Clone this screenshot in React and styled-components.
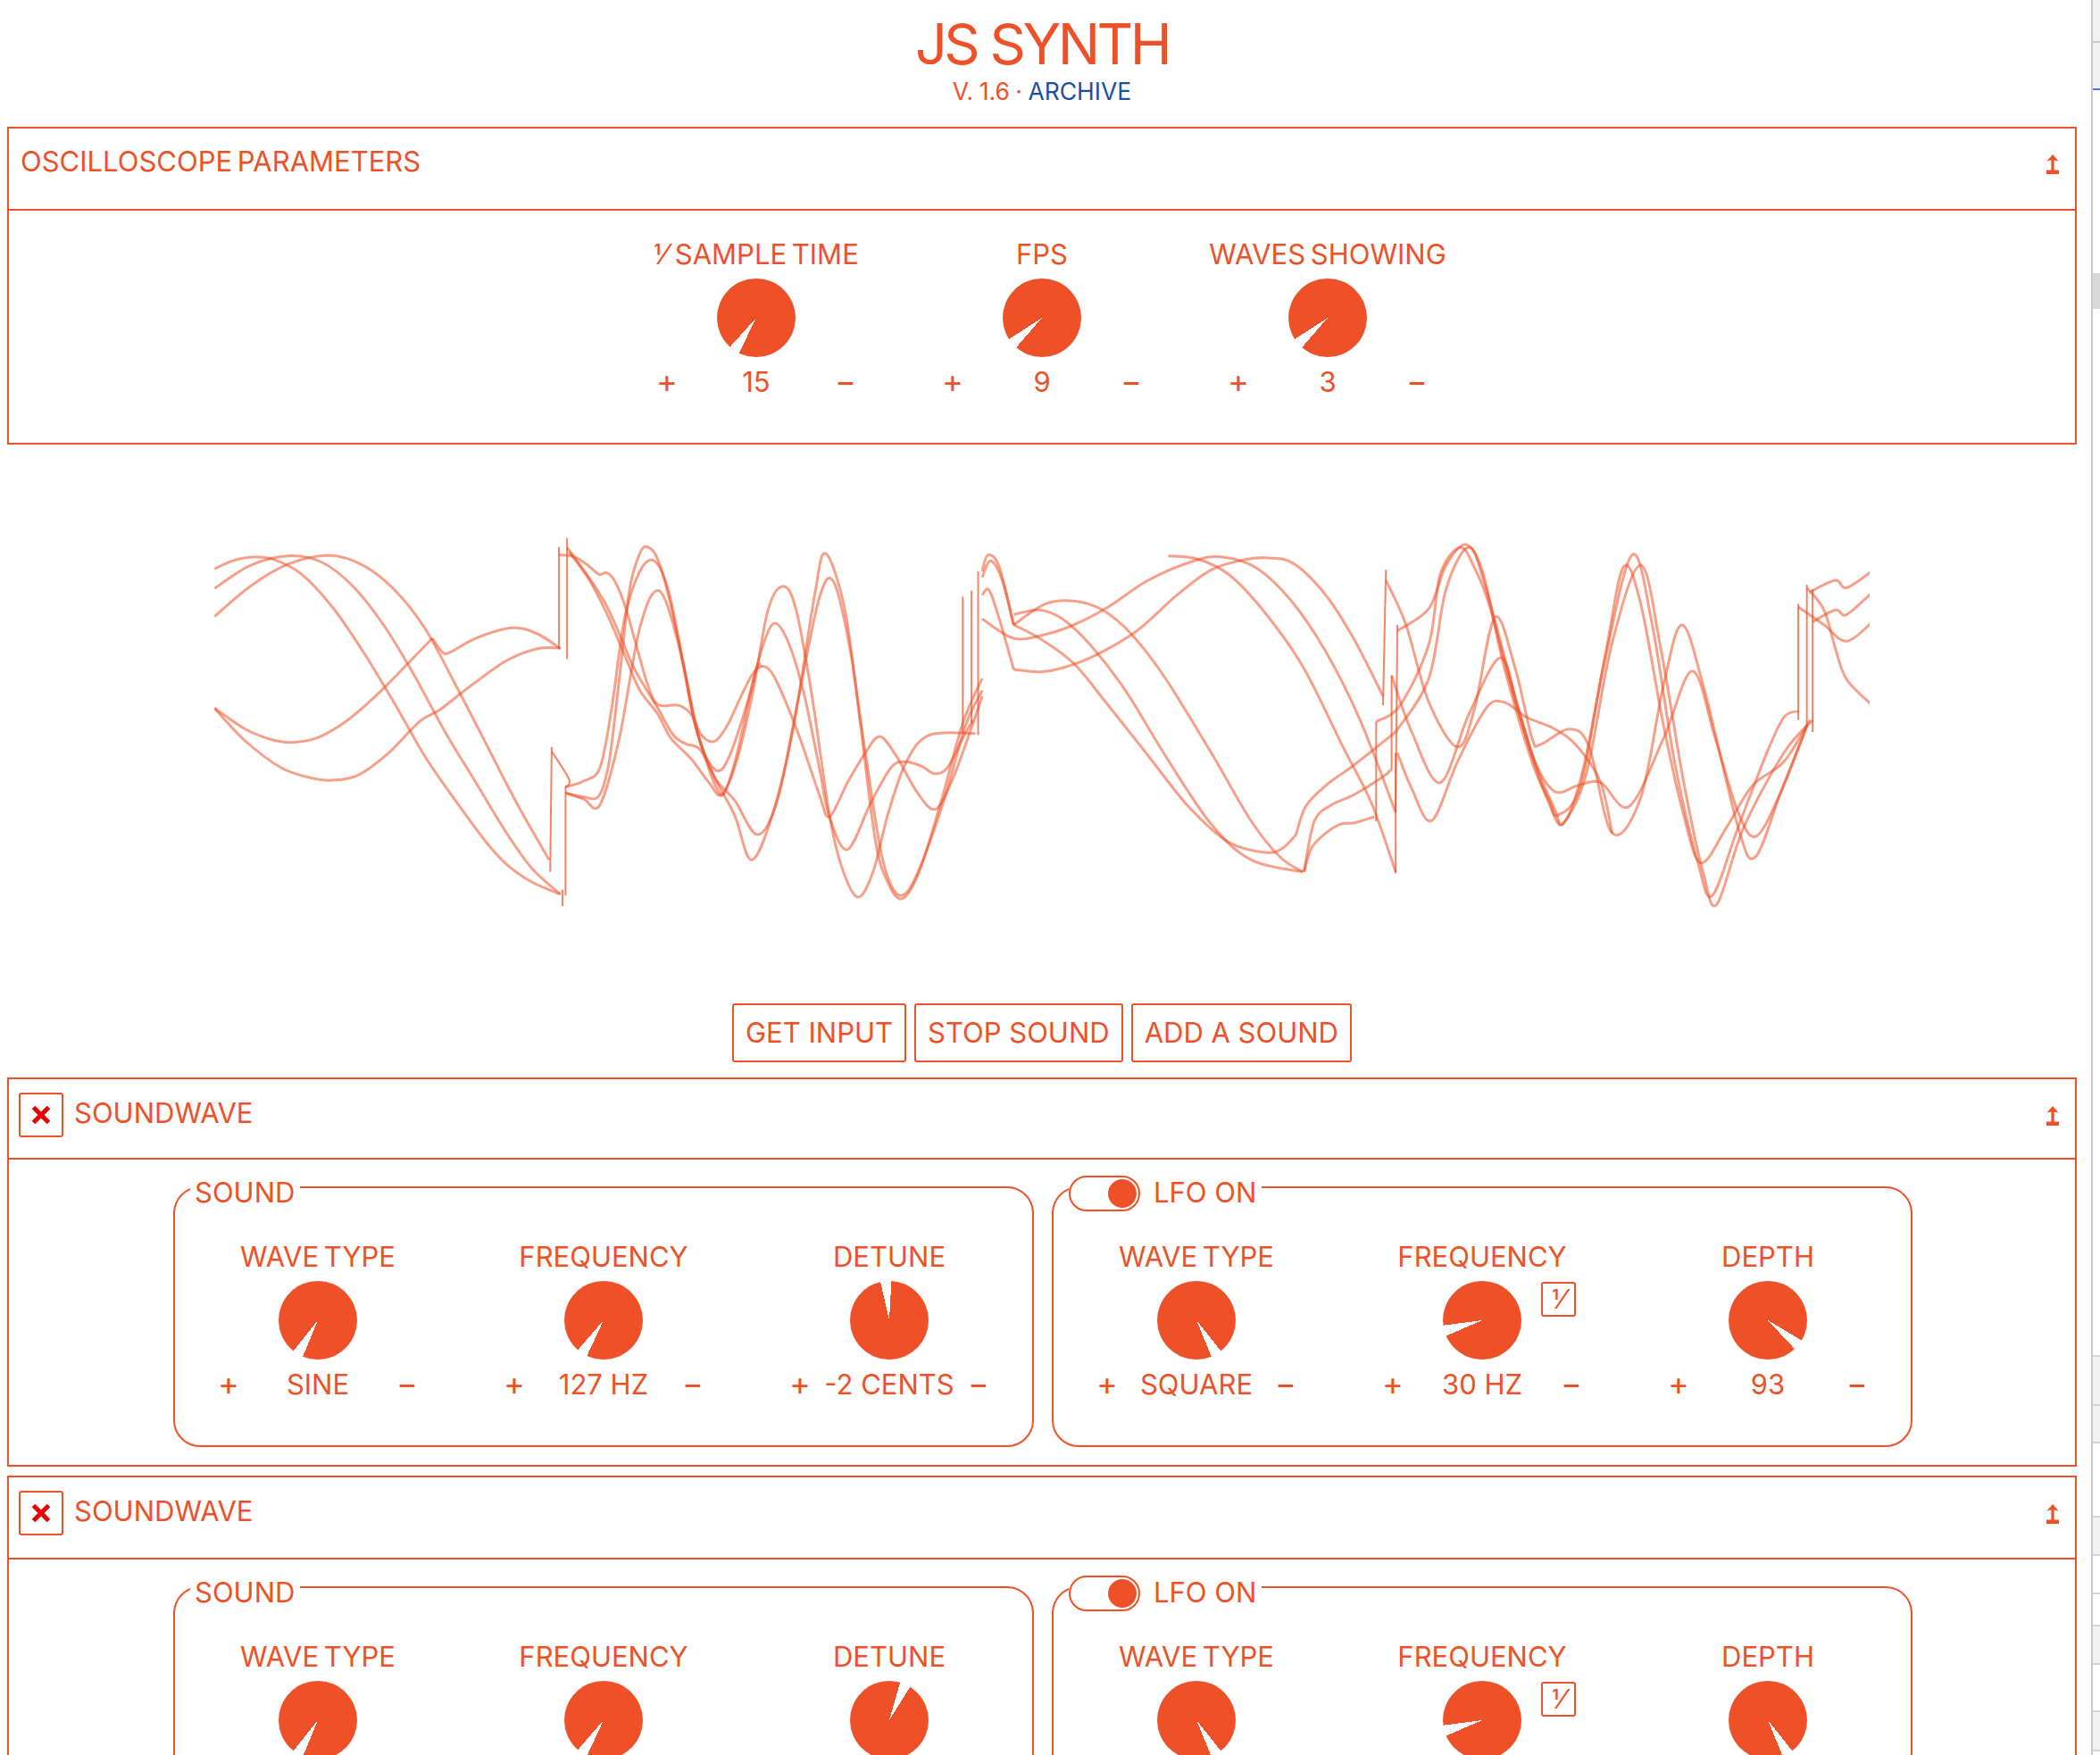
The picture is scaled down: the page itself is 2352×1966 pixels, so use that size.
import React from "react";
import styled, { createGlobalStyle } from "styled-components";

const ORANGE = "#ee5028";

const GlobalStyle = createGlobalStyle`
  html, body {
    margin: 0;
    padding: 0;
    height: 1966px;
    overflow: hidden;
    background: #fff;
  }
  body {
    font-family: Inter, "Liberation Sans", sans-serif;
    font-weight: 400;
    word-spacing: -3px;
    color: ${ORANGE};
  }
`;

const Shell = styled.div`
  display: flex;
  width: 2352px;
  height: 1966px;
  overflow: hidden;
`;

const Main = styled.main`
  width: 2342px;
  flex: none;
  padding: 0 16px 0 8px;
  box-sizing: border-box;
`;

const SideStrip = styled.aside`
  flex: 1;
  border-left: 2px solid #c9c9ce;
  display: flex;
  flex-direction: column;
`;

const StripBlock = styled.div`
  height: ${(p) => p.$h}px;
  box-sizing: border-box;
  background: ${(p) => p.$bg || "#fff"};
  border-bottom: ${(p) => (p.$line ? `2px solid ${p.$line}` : "none")};
  flex: none;
`;

const Header = styled.header`
  text-align: center;
  height: 142px;
  box-sizing: border-box;
  padding-top: 12px;
`;

const Title = styled.h1`
  margin: 0;
  font-size: 63px;
  line-height: 74px;
  font-weight: 400;
  letter-spacing: -3.5px;
  word-spacing: 0;
`;

const Version = styled.div`
  font-size: 26.5px;
  line-height: 32px;
  word-spacing: -1px;
`;

const ArchiveLink = styled.a`
  color: #1d4f9f;
`;

const Panel = styled.section`
  border: 2px solid ${ORANGE};
  margin-bottom: ${(p) => p.$gap}px;
`;

const PanelHeader = styled.div`
  display: flex;
  align-items: flex-start;
  justify-content: space-between;
  height: ${(p) => p.$h}px;
  box-sizing: border-box;
  border-bottom: 2px solid ${ORANGE};
  padding: ${(p) => p.$pad};
`;

const PanelTitle = styled.div`
  display: flex;
  align-items: flex-start;
  gap: 12px;
  font-size: 31px;
  line-height: 36px;
`;

const CloseButton = styled.button`
  width: 50px;
  height: 50px;
  background: #fff;
  border: 2px solid ${ORANGE};
  border-radius: 3px;
  padding: 0;
  display: flex;
  align-items: center;
  justify-content: center;
`;

const TitleText = styled.span`
  padding-top: 5px;
`;

const CollapseIcon = styled.svg`
  width: 14px;
  height: 22px;
  flex: none;
  margin-top: ${(p) => p.$top}px;
`;

const KnobRow = styled.div`
  display: flex;
  justify-content: center;
`;

const ParamsBody = styled(KnobRow)`
  height: 260px;
  padding-top: 31px;
  box-sizing: border-box;
`;

const Control = styled.div`
  width: 320px;
  display: flex;
  flex-direction: column;
  align-items: center;
  position: relative;
`;

const ControlLabel = styled.div`
  font-size: 31px;
  line-height: 36px;
  white-space: nowrap;
`;

const Reciprocal = styled.span`
  margin-right: 3px;
`;

const KnobSvg = styled.svg`
  width: 88px;
  height: 88px;
  margin-top: 9px;
  display: block;
`;

const ValueRow = styled.div`
  display: grid;
  grid-template-columns: 40px 160px 40px;
  width: 240px;
  margin-top: 10px;
  font-size: 31px;
  line-height: 36px;
  text-align: center;
  white-space: nowrap;
  word-spacing: 0;
`;

const Sign = styled.span`
  font-size: 36px;
  line-height: 34px;
`;

const ReciprocalBadge = styled.div`
  position: absolute;
  left: 226px;
  top: 46px;
  width: 39px;
  height: 39px;
  box-sizing: border-box;
  border: 2px solid ${ORANGE};
  border-radius: 3px;
  font-size: 30px;
  line-height: 34px;
  text-align: center;
`;

const ScopeWrap = styled.div`
  margin: 102px 0 100px;
  height: 424px;
  display: flex;
  justify-content: center;
`;

const ScopeSvg = styled.svg`
  width: 1854px;
  height: 424px;
  display: block;
`;

const ButtonBar = styled.div`
  display: flex;
  justify-content: center;
  gap: 9px;
  margin-bottom: 17px;
`;

const ActionButton = styled.button`
  font: inherit;
  font-size: 31px;
  line-height: 36px;
  color: ${ORANGE};
  background: #fff;
  height: 66px;
  padding: 0 13px;
  border: 2px solid ${ORANGE};
  border-radius: 3px;
`;

const SoundBody = styled.div`
  display: flex;
  justify-content: center;
  gap: 20px;
  padding: 4px 0 0 2px;
  height: 342px;
  box-sizing: border-box;
`;

const Group = styled.fieldset`
  width: 964px;
  height: 318px;
  box-sizing: border-box;
  margin: 0;
  padding: 0;
  border: 2px solid ${ORANGE};
  border-radius: 30px;
  min-width: 0;
`;

// the border runs through the middle of the legend box, so the 14px of top
// padding is what drops the text below the line
const GroupLegend = styled.legend`
  margin: 0 0 0 17px;
  padding: 14px 6px 0 ${(p) => (p.$toggle ? 0 : 5)}px;
  height: 54px;
  box-sizing: border-box;
  display: flex;
  align-items: center;
  gap: 15px;
  font-size: 31px;
  line-height: 36px;
  word-spacing: 0;
`;

const GroupLegendText = styled.span`
  position: relative;
  top: -1px;
`;

const Toggle = styled.span`
  width: 80px;
  height: 40px;
  box-sizing: border-box;
  border: 2px solid ${ORANGE};
  border-radius: 20px;
  padding: 2px;
  display: flex;
  justify-content: flex-end;
  align-items: center;
`;

const ToggleDot = styled.span`
  width: 32px;
  height: 32px;
  border-radius: 50%;
  background: ${ORANGE};
`;

const GroupKnobs = styled(KnobRow)`
  padding-top: 33px;
`;

// draws the pie knob with the wedge pointing at `angle`, degrees clockwise from top
const Knob = ({ angle }) => (
  <KnobSvg viewBox="-44 -44 88 88">
    <circle r="44" fill={ORANGE} />
    <polygon
      points="0,0 -8.2,-58 8.2,-58"
      fill="#fff"
      transform={`rotate(${angle})`}
      shapeRendering="crispEdges"
    />
  </KnobSvg>
);

const KnobControl = ({ label, angle, value, badge }) => (
  <Control>
    <ControlLabel>{label}</ControlLabel>
    <Knob angle={angle} />
    {badge && <ReciprocalBadge>⅟</ReciprocalBadge>}
    {value && (
      <ValueRow>
        <Sign>+</Sign>
        <span>{value}</span>
        <Sign>−</Sign>
      </ValueRow>
    )}
  </Control>
);

const Collapse = ({ top }) => (
  <CollapseIcon viewBox="0 0 14 22" $top={top}>
    <path d="M7 0 L13.5 7.5 L8.6 6.5 V17.5 H14 V22 H0 V17.5 H5.4 V6.5 L0.5 7.5 Z" fill={ORANGE} />
  </CollapseIcon>
);

const CloseX = () => (
  <svg width="22" height="22" viewBox="0 0 22 22">
    <path d="M2.5 2.5 L19.5 19.5 M19.5 2.5 L2.5 19.5" stroke="#e60000" strokeWidth="5" />
  </svg>
);

// wave traces, written as points read off the two scope crops
const left = (pts) => pts.map(([x, y]) => [200 + x / 1.742, 560 + y / 3]);
const right = (pts) => pts.map(([x, y]) => [1100 + x / 1.559, 560 + y / 3]);

const smooth = (pts) => {
  if (pts.length < 3) return "M" + pts.map((p) => p.join(" ")).join("L");
  let d = `M${pts[0][0]} ${pts[0][1]}`;
  for (let i = 0; i < pts.length - 1; i++) {
    const p0 = pts[Math.max(i - 1, 0)];
    const p1 = pts[i];
    const p2 = pts[i + 1];
    const p3 = pts[Math.min(i + 2, pts.length - 1)];
    const c1x = p1[0] + (p2[0] - p0[0]) / 6;
    const c1y = p1[1] + (p2[1] - p0[1]) / 6;
    const c2x = p2[0] - (p3[0] - p1[0]) / 6;
    const c2y = p2[1] - (p3[1] - p1[1]) / 6;
    d += `C${c1x.toFixed(1)} ${c1y.toFixed(1)} ${c2x.toFixed(1)} ${c2y.toFixed(1)} ${p2[0].toFixed(1)} ${p2[1].toFixed(1)}`;
  }
  return d;
};

const leftTraces = [
  [[70,232],[105,205],[145,192],[185,200],[240,250],[300,360],[360,510],[420,680],[480,860],[540,1010],[600,1150],[640,1225],[690,1285],[745,1325]],
  [[70,298],[140,220],[215,188],[280,210],[340,290],[400,420],[460,590],[520,780],[580,950],[640,1120],[690,1240],[745,1325]],
  [[70,392],[140,290],[215,215],[295,187],[360,220],[420,300],[480,430],[540,620],[600,820],[660,1020],[723,1210]],
  [[70,700],[130,770],[180,805],[220,815],[270,800],[330,740],[390,650],[450,545],[495,465]],
  [[495,465],[515,512],[530,512],[580,465],[650,430],[700,450],[745,500]],
  [[70,700],[130,810],[200,900],[260,935],[300,942],[350,925],[410,850],[470,745],[510,705],[570,625],[640,540],[700,500],[745,498]],
  [[742,185],[770,190],[795,215],[820,250],[835,245],[850,270],[870,350],[890,470],[915,620],[935,688],[975,690],[1000,720],[1020,790],[1045,812],[1070,760],[1100,650],[1120,585],[1137,560],[1155,575],[1175,640],[1210,790],[1250,990],[1270,1065],[1305,950],[1340,850],[1368,795],[1400,860],[1440,980],[1475,1040],[1505,960],[1540,800],[1568,660]],
  [[758,160],[790,235],[830,340],[860,450],[890,570],[935,700],[965,790],[990,820],[1015,835],[1050,910],[1075,860],[1110,680],[1140,490],[1163,415],[1190,480],[1220,650],[1250,900],[1270,1065],[1305,1175],[1350,1020],[1390,900],[1418,880],[1450,895],[1475,920],[1500,900],[1530,800],[1550,740]],
  [[762,175],[800,265],[835,380],[870,520],[900,640],[935,720],[960,800],[1000,870],[1035,950],[1060,990],[1090,870],[1120,650],[1150,370],[1180,290],[1205,370],[1235,650],[1270,1060],[1295,1240],[1325,1335],[1355,1250],[1385,1050],[1420,880],[1465,790],[1555,785]],
  [[755,985],[790,998],[820,995],[840,880],[860,600],[880,300],[900,180],[915,158],[935,200],[960,350],[985,560],[1010,770],[1045,930],[1085,1060],[1118,1210],[1160,1050],[1200,760],[1240,330],[1262,180],[1300,370],[1330,750],[1360,1150],[1385,1290],[1412,1340],[1445,1250],[1490,1000],[1530,750],[1568,600]],
  [[755,965],[790,945],[822,900],[845,700],[870,400],[900,240],[928,205],[955,300],[985,550],[1010,770],[1045,930],[1085,1010],[1130,1125],[1170,1000],[1210,660],[1250,330],[1278,275],[1310,500],[1340,850],[1370,1180],[1395,1310],[1420,1320],[1450,1220],[1495,1000],[1535,760],[1568,640]],
  [[755,985],[790,1005],[822,1025],[860,800],[900,430],[937,305],[975,480],[1010,760],[1030,880],[1050,970],[1065,985],[1090,850],[1125,580],[1137,555]],
];

const leftJumps = [
  [[742,158],[742,500]],
  [[758,128],[758,535]],
  [[728,830],[725,1250]],
  [[728,845],[762,940],[755,965]],
  [[755,965],[755,1330]],
  [[749,1365],[749,1310]],
  [[1530,325],[1530,785]],
  [[1547,305],[1547,750]],
  [[1560,240],[1560,790]],
];

const rightTraces = [
  [[0,240],[10,185],[30,225],[55,420]],
  [[0,260],[15,205],[35,270],[55,420]],
  [[0,320],[12,303],[30,400],[55,570]],
  [[55,385],[100,370],[140,400],[190,490],[250,640],[320,860],[400,1090],[470,1210],[560,1250]],
  [[55,420],[110,350],[160,340],[210,370],[260,450],[320,600],[400,850],[470,1080],[520,1200],[560,1250]],
  [[55,420],[100,465],[160,550],[220,690],[290,860],[360,1030],[430,1150],[495,1185],[525,1170],[548,1125]],
  [[0,400],[55,465],[110,452],[160,420],[220,360],[290,270],[370,205],[420,192],[480,230],[540,340],[600,510],[660,740],[722,1050]],
  [[55,570],[100,578],[140,565],[200,520],[270,440],[340,320],[400,235],[460,200],[500,195],[545,215],[600,320],[650,470],[700,660]],
  [[325,188],[375,198],[430,250],[490,370],[560,560],[630,830],[680,1020],[722,1250]],
  [[562,1250],[575,1170],[600,1120],[625,1090],[650,1085],[685,1065]],
  [[562,1250],[580,1080],[610,1025],[650,990],[700,930],[715,905]],
  [[548,1125],[565,1030],[600,960],[650,890],[722,780]],
  [[688,745],[730,690],[780,485],[800,250],[835,160],[860,230],[885,350],[920,600],[960,860],[990,1020],[1015,1088],[1050,900],[1090,500],[1120,225],[1150,350],[1190,760],[1225,1060],[1255,1220],[1300,1100],[1345,960],[1400,880],[1445,740]],
  [[725,440],[780,365],[810,220],[845,150],[875,250],[910,550],[960,880],[990,1010],[1005,1060],[1045,960],[1085,560],[1135,185],[1170,420],[1210,890],[1250,1220],[1275,1330],[1320,1100],[1370,850],[1400,730],[1425,710]],
  [[722,780],[780,600],[810,300],[850,160],[880,300],[925,620],[965,880],[1000,1040],[1015,1085],[1055,920],[1100,480],[1150,220],[1185,500],[1225,950],[1260,1260],[1283,1358],[1330,1100],[1400,850],[1450,740]],
  [[705,270],[740,420],[780,680],[830,830],[860,700],[895,395],[930,560],[960,800],[975,822],[1025,770],[1060,830],[1100,1120],[1150,1000],[1190,620],[1222,420],[1260,630],[1320,1100],[1350,1200],[1395,980],[1440,760]],
  [[715,590],[750,780],[800,950],[850,720],[905,530],[935,700],[965,880],[1000,980],[1040,960],[1080,950],[1130,1030],[1190,800],[1240,575],[1280,800],[1320,1050],[1352,1130],[1395,980],[1440,760]],
  [[725,850],[750,970],[785,1078],[830,880],[880,700],[912,680],[950,730],[1000,770],[1040,830],[1080,950],[1100,1120]],
  [[1425,360],[1470,420],[1510,475],[1560,400]],
  [[1450,410],[1490,370],[1510,385],[1560,300]],
  [[1445,310],[1490,270],[1510,295],[1560,230]],
  [[1440,295],[1470,370],[1490,500],[1510,605],[1560,700]],
];

const rightJumps = [
  [[705,235],[700,690]],
  [[688,745],[688,1080]],
  [[715,590],[715,905]],
  [[725,420],[722,1050]],
  [[722,850],[722,1255]],
  [[1425,350],[1425,740]],
  [[1440,285],[1440,760]],
  [[1450,300],[1450,780]],
];

const Scope = () => (
  <ScopeSvg viewBox="240 600 1854 424">
    <g fill="none" stroke={ORANGE} strokeOpacity="0.55" strokeWidth="3" strokeLinejoin="round">
      {leftTraces.map((t, i) => <path key={i} d={smooth(left(t))} />)}
      {rightTraces.map((t, i) => <path key={i} d={smooth(right(t))} />)}
    </g>
    <g fill="none" stroke={ORANGE} strokeOpacity="0.7" strokeWidth="2">
      {leftJumps.map((t, i) => <path key={i} d={smooth(left(t))} />)}
      {rightJumps.map((t, i) => <path key={i} d={smooth(right(t))} />)}
    </g>
  </ScopeSvg>
);

// the last panel runs off the bottom of the window, so its value rows are left out
const SoundPanel = ({ detune, lfoDepth, detuneValue, gap, headerHeight, showValues }) => (
  <Panel $gap={gap}>
    <PanelHeader $h={headerHeight} $pad="15px 18px 0 11px">
      <PanelTitle>
        <CloseButton><CloseX /></CloseButton>
        <TitleText>SOUNDWAVE</TitleText>
      </PanelTitle>
      <Collapse top={15} />
    </PanelHeader>
    <SoundBody>
      <Group>
        <GroupLegend><GroupLegendText>SOUND</GroupLegendText></GroupLegend>
        <GroupKnobs>
          <KnobControl label="WAVE TYPE" angle={210.5} value={showValues && "SINE"} />
          <KnobControl label="FREQUENCY" angle={213} value={showValues && "127 HZ"} />
          <KnobControl label="DETUNE" angle={detune} value={showValues && detuneValue} />
        </GroupKnobs>
      </Group>
      <Group>
        <GroupLegend $toggle>
          <Toggle><ToggleDot /></Toggle>
          <GroupLegendText>LFO ON</GroupLegendText>
        </GroupLegend>
        <GroupKnobs>
          <KnobControl label="WAVE TYPE" angle={149.5} value={showValues && "SQUARE"} />
          <KnobControl label="FREQUENCY" angle={254.5} value={showValues && "30 HZ"} badge />
          <KnobControl label="DEPTH" angle={lfoDepth} value={showValues && "93"} />
        </GroupKnobs>
      </Group>
    </SoundBody>
  </Panel>
);

const App = () => (
  <Shell>
    <GlobalStyle />
    <Main>
      <Header>
        <Title>JS SYNTH</Title>
        <Version>
          V. 1.6 · <ArchiveLink>ARCHIVE</ArchiveLink>
        </Version>
      </Header>
      <Panel $gap={0}>
        <PanelHeader $h={92} $pad="19px 18px 0 13px">
          <PanelTitle>OSCILLOSCOPE PARAMETERS</PanelTitle>
          <Collapse top={10} />
        </PanelHeader>
        <ParamsBody>
          <KnobControl
            label={<><Reciprocal>⅟</Reciprocal> SAMPLE TIME</>}
            angle={214}
            value="15"
          />
          <KnobControl label="FPS" angle={229} value="9" />
          <KnobControl label="WAVES SHOWING" angle={229} value="3" />
        </ParamsBody>
      </Panel>
      <ScopeWrap>
        <Scope />
      </ScopeWrap>
      <ButtonBar>
        <ActionButton>GET INPUT</ActionButton>
        <ActionButton>STOP SOUND</ActionButton>
        <ActionButton>ADD A SOUND</ActionButton>
      </ButtonBar>
      <SoundPanel detune={355} lfoDepth={129} detuneValue="-2 CENTS" gap={10} headerHeight={90} showValues />
      <SoundPanel detune={24} lfoDepth={149.5} gap={0} headerHeight={92} />
    </Main>
    <SideStrip>
      <StripBlock $h={48} $bg="#f1f1f4" $line="#c9c9ce" />
      <StripBlock $h={53} $bg="#f1f1f4" $line="#3b78e0" />
      <StripBlock $h={205} />
      <StripBlock $h={40} $bg="#d9d9d9" />
      <StripBlock $h={1174} $line="#d4d4d8" />
      <StripBlock $h={55} $bg="#f1f1f4" $line="#d4d4d8" />
      <StripBlock $h={42} $bg="#f1f1f4" $line="#d4d4d8" />
      <StripBlock $h={83} $line="#d4d4d8" />
      <StripBlock $h={43} $bg="#f1f1f4" $line="#d4d4d8" />
      <StripBlock $h={43} $line="#d4d4d8" />
      <StripBlock $h={36} $line="#d4d4d8" />
      <StripBlock $h={43} $bg="#f1f1f4" $line="#d4d4d8" />
      <StripBlock $h={53} $line="#d4d4d8" />
      <StripBlock $h={44} $bg="#f1f1f4" $line="#d4d4d8" />
    </SideStrip>
  </Shell>
);

export default App;
